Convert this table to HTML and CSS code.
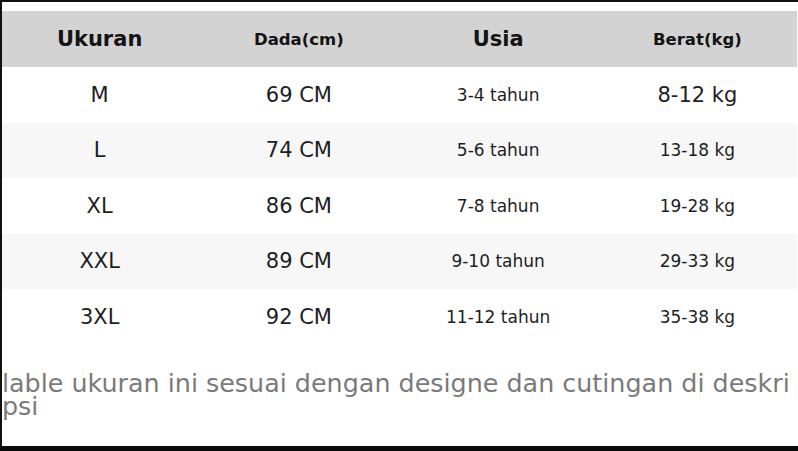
FILE: index.html
```html
<!DOCTYPE html>
<html>
<head>
<meta charset="utf-8">
<link rel="stylesheet" href="styles.css">
</head>
<body>
<div class="frame">
  <table class="size-table">
    <thead>
      <tr>
        <th class="big">Ukuran</th>
        <th class="small">Dada(cm)</th>
        <th class="big">Usia</th>
        <th class="small">Berat(kg)</th>
      </tr>
    </thead>
    <tbody>
      <tr><td class="big">M</td><td class="big">69 CM</td><td class="small">3-4 tahun</td><td class="big">8-12 kg</td></tr>
      <tr class="alt"><td class="big">L</td><td class="big">74 CM</td><td class="small">5-6 tahun</td><td class="small">13-18 kg</td></tr>
      <tr><td class="big">XL</td><td class="big">86 CM</td><td class="small">7-8 tahun</td><td class="small">19-28 kg</td></tr>
      <tr class="alt"><td class="big">XXL</td><td class="big">89 CM</td><td class="small">9-10 tahun</td><td class="small">29-33 kg</td></tr>
      <tr><td class="big">3XL</td><td class="big">92 CM</td><td class="small">11-12 tahun</td><td class="small">35-38 kg</td></tr>
    </tbody>
  </table>
  <p class="note">lable ukuran ini sesuai dengan designe dan cutingan di deskri<br>psi</p>
</div>
<div class="bottom-bar"></div>
</body>
</html>
```
FILE: styles.css
```css
html, body {
  margin: 0;
  padding: 0;
  background: #ffffff;
}
body {
  width: 798px;
  height: 451px;
  overflow: hidden;
  font-family: "DejaVu Sans", sans-serif;
  color: #1e1e1e;
}
.frame {
  position: relative;
  height: 446px;
  box-sizing: border-box;
  padding-top: 11px;
  overflow: hidden;
}
.frame::before {
  content: "";
  position: absolute;
  left: 0;
  top: 0;
  right: 0;
  bottom: 0;
  border-top: 2px solid #111;
  border-left: 2px solid #111;
  pointer-events: none;
  z-index: 2;
}
.size-table {
  width: 797px;
  border-collapse: collapse;
  table-layout: fixed;
}
.size-table th,
.size-table td {
  text-align: center;
  vertical-align: middle;
  padding: 0;
}
.size-table thead tr {
  background: #d3d3d3;
  height: 56px;
}
.size-table th {
  font-weight: bold;
  color: #141414;
}
.size-table th.big { font-size: 21px; }
.size-table th.small { font-size: 16.5px; }
.size-table tbody tr {
  height: 55.5px;
}
.size-table tbody tr.alt {
  background: #f7f7f7;
}
.size-table td.big { font-size: 21px; }
.size-table td.small { font-size: 17px; }
.note {
  margin: 27px 0 0 2px;
  font-size: 25.4px;
  line-height: 23.5px;
  color: #7a7a7a;
  white-space: nowrap;
}
.bottom-bar {
  height: 5px;
  background: #0a0a0a;
}
```
